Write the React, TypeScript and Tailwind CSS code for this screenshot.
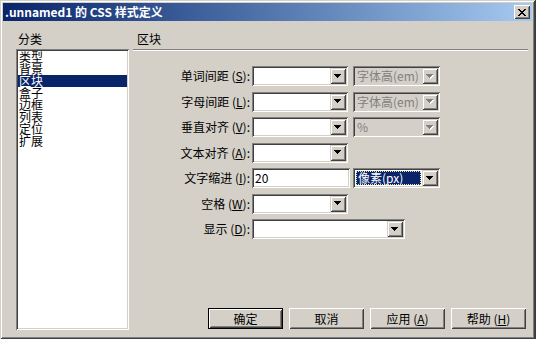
import React from "react";

const sunken =
  "shadow-[inset_1px_1px_#808080,inset_-1px_-1px_#ffffff,inset_2px_2px_#404040,inset_-2px_-2px_#d4d0c8]";
const frame =
  "shadow-[inset_1px_1px_#d4d0c8,inset_-1px_-1px_#404040,inset_2px_2px_#ffffff,inset_-2px_-2px_#808080]";
const button =
  "shadow-[inset_1px_1px_#ffffff,inset_-1px_-1px_#404040,inset_2px_2px_#d4d0c8,inset_-2px_-2px_#808080]";

function Arrow({ disabled }: { disabled?: boolean }) {
  const px = [
    [0, 0, 7],
    [1, 1, 5],
    [2, 2, 3],
    [3, 3, 1],
  ];
  return (
    <svg width="8" height="5" viewBox="0 0 8 5" shapeRendering="crispEdges">
      {disabled &&
        px.map(([x, y, w]) => (
          <rect key={"s" + y} x={x + 1} y={y + 1} width={w} height={1} fill="#ffffff" />
        ))}
      {px.map(([x, y, w]) => (
        <rect key={y} x={x} y={y} width={w} height={1} fill={disabled ? "#808080" : "#000000"} />
      ))}
    </svg>
  );
}

function CloseGlyph() {
  const rows = ["11000011", "01100110", "00111100", "00011000", "00111100", "01100110", "11000011"];
  return (
    <svg width="8" height="7" viewBox="0 0 8 7" shapeRendering="crispEdges">
      {rows.flatMap((r, y) =>
        r.split("").map((c, x) => (c === "1" ? <rect key={`${x}-${y}`} x={x} y={y} width={1} height={1} fill="#000" /> : null))
      )}
    </svg>
  );
}

function Combo({
  className,
  value,
  disabled,
  selected,
}: {
  className: string;
  value?: string;
  disabled?: boolean;
  selected?: boolean;
}) {
  return (
    <div
      className={`flex h-[20px] items-stretch p-[2px] ${sunken} ${className} ${
        disabled ? "bg-[#d4d0c8] text-[#808080]" : "bg-white text-black"
      }`}
    >
      <div className="flex min-w-0 flex-1 items-center">
        {selected ? (
          <div className="m-px flex h-[14px] flex-1 items-center bg-[#0a246a] pl-[2px] text-white outline-1 outline-dotted outline-[#e8e8a0] -outline-offset-1">
            {value}
          </div>
        ) : (
          <span className="pl-[2px]">{value}</span>
        )}
      </div>
      <div className={`flex w-[16px] items-center justify-center bg-[#d4d0c8] ${frame}`}>
        <Arrow disabled={disabled} />
      </div>
    </div>
  );
}

function Row({ label, children }: { label: React.ReactNode; children: React.ReactNode }) {
  return (
    <div className="flex h-[25.5px] items-start">
      <div className="flex h-[20px] w-[119px] items-center justify-end pr-[2px] whitespace-nowrap">{label}</div>
      <div className="flex items-start">{children}</div>
    </div>
  );
}

function Btn({ children, main }: { children: React.ReactNode; main?: boolean }) {
  return (
    <div
      className={`flex h-[21px] w-[75px] items-center justify-center bg-[#d4d0c8] ${button} ${
        main ? "border border-black" : ""
      }`}
    >
      {children}
    </div>
  );
}

export default function App() {
  const cats = ["类型", "背景", "区块", "盒子", "边框", "列表", "定位", "扩展"];

  return (
    <div className="h-[339px] w-[536px] bg-[#3c3c3c] font-['Noto_Sans_CJK_SC',sans-serif] text-[12px] leading-[14px] text-black">
      <div className={`flex h-[339px] w-[535px] flex-col bg-[#d4d0c8] p-[3px] ${frame}`}>
        {/* title bar */}
        <div className="flex h-[18px] items-center justify-between bg-linear-to-r from-[#0a246a] to-[#a6caf0] pl-[2px] pr-[2px]">
          <span className="font-bold text-white">.unnamed1 的 CSS 样式定义</span>
          <div className={`flex h-[14px] w-[16px] items-center justify-center bg-[#d4d0c8] ${button}`}>
            <CloseGlyph />
          </div>
        </div>

        <div className="mt-px flex flex-1">
          {/* categories */}
          <div className="flex w-[126px] flex-col pt-[10px] pb-[6px] pl-[13px]">
            <div className="pl-[2px]">分类</div>
            <div className={`mt-[3px] flex flex-1 flex-col bg-white p-[2px] ${sunken}`}>
              {cats.map((c) => (
                <div
                  key={c}
                  className={`h-[12px] pl-px leading-[12px] ${c === "区块" ? "bg-[#0a246a] text-white" : ""}`}
                >
                  {c}
                </div>
              ))}
            </div>
          </div>

          {/* panel */}
          <div className="ml-[4px] flex flex-1 flex-col pt-[10px] pr-[4px] pb-[7px]">
            <div className="pl-[4px]">区块</div>
            <div className="mt-[3px] h-px bg-[#808080]" />
            <div className="h-px bg-white" />

            <div className="mt-[15px] flex flex-col">
              <Row label={<>单词间距 (<u>S</u>):</>}>
                <Combo className="w-[96px]" />
                <Combo className="ml-[5px] w-[87px]" value="字体高(em)" disabled />
              </Row>
              <Row label={<>字母间距 (<u>L</u>):</>}>
                <Combo className="w-[96px]" />
                <Combo className="ml-[5px] w-[87px]" value="字体高(em)" disabled />
              </Row>
              <Row label={<>垂直对齐 (<u>V</u>):</>}>
                <Combo className="w-[96px]" />
                <Combo className="ml-[5px] w-[87px]" value="%" disabled />
              </Row>
              <Row label={<>文本对齐 (<u>A</u>):</>}>
                <Combo className="w-[96px]" />
              </Row>
              <Row label={<>文字缩进 (<u>I</u>):</>}>
                <div className={`flex h-[20px] w-[98px] items-center bg-white pl-[3px] ${sunken}`}>20</div>
                <Combo className="ml-[3px] w-[87px]" value="像素(px)" selected />
              </Row>
              <Row label={<>空格 (<u>W</u>):</>}>
                <Combo className="w-[96px]" />
              </Row>
              <Row label={<>显示 (<u>D</u>):</>}>
                <Combo className="w-[153px]" />
              </Row>
            </div>

            <div className="mt-auto ml-[75px] flex gap-[6px]">
              <Btn main>确定</Btn>
              <Btn>取消</Btn>
              <Btn>
                应用 (<u>A</u>)
              </Btn>
              <Btn>
                帮助 (<u>H</u>)
              </Btn>
            </div>
          </div>
        </div>
      </div>
    </div>
  );
}
